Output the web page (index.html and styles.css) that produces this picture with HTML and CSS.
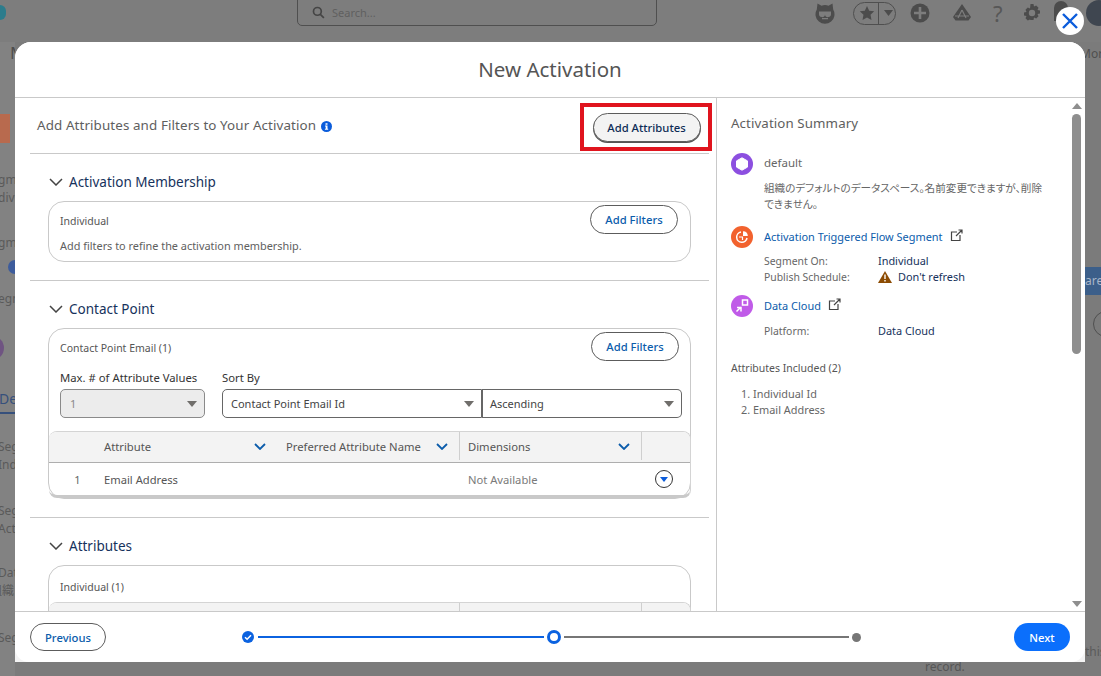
FILE: index.html
```html
<!DOCTYPE html>
<html lang="en">
<head>
<meta charset="utf-8">
<title>New Activation</title>
<link rel="stylesheet" href="styles.css">
</head>
<body>
<div class="page">
  <header class="topbar">
    <span class="logo"></span>
    <div class="search">
      <svg class="search-icon" viewBox="0 0 14 14"><circle cx="5.8" cy="5.8" r="4.2"/><path d="M9 9l3.8 3.8"/></svg>
      <span>Search...</span>
    </div>
    <div class="global-icons">
      <svg class="gi" width="22" height="22" viewBox="0 0 22 22"><path class="gd" d="M3.500 1.500l4 2.300a9.500 9.500 0 0 1 7 0l4-2.300.7 6A9.500 9.500 0 1 1 2.800 7.500z"/><path class="gl" d="M5 9.500h12v2.300a3 3 0 0 1-6 .6 3 3 0 0 1-6-.6zM8 16h6v1.300H8z"/></svg>
      <div class="fav"><svg width="16" height="16" viewBox="0 0 16 16"><path class="gd" d="M8 1l2.200 4.700 5 .6-3.700 3.500 1 5.100L8 12.400l-4.500 2.500 1-5.100L.8 6.300l5-.6z"/></svg><span class="fav-sep"></span><svg width="9" height="6" viewBox="0 0 9 6"><path class="gd" d="M0 0h9L4.500 6z"/></svg></div>
      <svg class="gi" width="20" height="20" viewBox="0 0 20 20"><circle class="gd" cx="10" cy="10" r="9.500"/><path class="gl" d="M8.700 4h2.600v4.700H16v2.600h-4.700V16H8.700v-4.700H4V8.700h4.700z"/></svg>
      <svg class="gi" width="20" height="20" viewBox="0 0 20 20"><path class="gd" d="M10 1l9 13-2.500 3.500h-13L1 14z"/><path class="gs" d="M3 13h14M10 7l-4 8M10 7l4 8"/></svg>
      <span class="help">?</span>
      <svg class="gi" width="20" height="20" viewBox="0 0 20 20"><path class="gd" d="M8.500 1h3l.5 2.500 2.200-1 2.300 2.300-1 2.200 2.500.5v3l-2.500.5 1 2.200-2.300 2.300-2.200-1-.5 2.500h-3L8 16.500l-2.200 1-2.300-2.300 1-2.200L2 12.500v-3L4.500 9l-1-2.200 2.300-2.300 2.200 1z"/><circle class="gl" cx="10" cy="10" r="3.200"/></svg>
      <span class="bell"></span>
      <span class="avatar"></span>
    </div>
  </header>
  <div class="under">
    <div class="bg-left">
      <span class="frag-m">M</span>
      <span class="frag-orange"></span>
      <span class="frag">gm</span>
      <span class="frag">divi</span>
      <span class="frag">gm</span>
      <span class="frag-blue"></span>
      <span class="frag">egn</span>
      <span class="frag-purple"></span>
      <span class="frag-tab">De</span>
      <span class="frag">Seg</span>
      <span class="frag">Indi</span>
      <span class="frag">Seg</span>
      <span class="frag">Acti</span>
      <span class="frag">Dat</span>
      <span class="frag cjk">組織</span>
      <span class="frag">Seg</span>
    </div>
    <div class="bg-middle"><span class="bg-record">record.</span></div>
    <div class="bg-right">
      <span class="frag-more">Mor</span>
      <span class="frag-share">are</span>
      <span class="frag-circle"></span>
      <span class="frag-this">this</span>
    </div>
  </div>

  <section class="modal">
    <h1 class="modal-title">New Activation</h1>
    <div class="modal-body">
      <div class="main">
        <div class="main-head">
          <h2 class="main-heading">Add Attributes and Filters to Your Activation</h2>
          <svg class="info" width="11" height="11" viewBox="0 0 11 11"><circle cx="5.500" cy="5.500" r="5.500"/><path d="M4.500 2.300h2v1.500h-2zM4 4.600h2.500v3.200h.7v1H3.900v-1h.8V5.600H4z"/></svg>
          <div class="highlight"><button class="btn btn-attrs">Add Attributes</button></div>
        </div>

        <section class="section section-first">
          <div class="section-title"><svg class="chev" width="14" height="8" viewBox="0 0 14 8"><path d="M1 1l6 6 6-6"/></svg>Activation Membership</div>
          <div class="card card-short">
            <div class="card-head"><span class="card-label">Individual</span><button class="btn btn-filter">Add Filters</button></div>
            <p class="card-note">Add filters to refine the activation membership.</p>
          </div>
        </section>

        <section class="section section-mid">
          <div class="section-title"><svg class="chev" width="14" height="8" viewBox="0 0 14 8"><path d="M1 1l6 6 6-6"/></svg>Contact Point</div>
          <div class="card">
            <div class="card-head"><span class="card-label">Contact Point Email (1)</span><button class="btn btn-filter">Add Filters</button></div>
            <div class="controls">
              <div class="field field-max">
                <label class="field-label">Max. # of Attribute Values</label>
                <div class="select select-disabled"><span>1</span><i class="caret"></i></div>
              </div>
              <div class="field field-sort">
                <label class="field-label">Sort By</label>
                <div class="select-pair">
                  <div class="select select-left"><span>Contact Point Email Id</span><i class="caret"></i></div>
                  <div class="select select-right"><span>Ascending</span><i class="caret"></i></div>
                </div>
              </div>
            </div>
            <div class="table">
              <div class="tr th">
                <span></span>
                <span class="col col-attr">Attribute<svg class="tchev" width="12" height="7" viewBox="0 0 12 7"><path d="M1 1l5 5 5-5"/></svg></span>
                <span class="col col-pref">Preferred Attribute Name<svg class="tchev" width="12" height="7" viewBox="0 0 12 7"><path d="M1 1l5 5 5-5"/></svg></span>
                <span class="col col-pref col-div">Dimensions<svg class="tchev" width="12" height="7" viewBox="0 0 12 7"><path d="M1 1l5 5 5-5"/></svg></span>
                <span class="col-div"></span>
              </div>
              <div class="tr td">
                <span class="num">1</span>
                <span class="col">Email Address</span>
                <span></span>
                <span class="col col-muted">Not Available</span>
                <span class="row-action"><i class="row-btn"><i class="row-caret"></i></i></span>
              </div>
            </div>
          </div>
        </section>

        <section class="section section-last">
          <div class="section-title"><svg class="chev" width="14" height="8" viewBox="0 0 14 8"><path d="M1 1l6 6 6-6"/></svg>Attributes</div>
          <div class="card card-clip">
            <div class="card-head card-head-plain"><span class="card-label">Individual (1)</span></div>
            <div class="table table-flush">
              <div class="tr th">
                <span></span><span></span><span></span><span class="col-div"></span><span class="col-div"></span>
              </div>
            </div>
          </div>
        </section>
      </div>

      <aside class="summary">
        <div class="summary-content">
          <h2 class="summary-title">Activation Summary</h2>
          <div class="item item-default">
            <svg class="badge" width="22" height="22" viewBox="0 0 22 22"><circle cx="11" cy="11" r="11" fill="#8c4fe0"/><path d="M11 4.800l5.500 3.100v6.200L11 17.200l-5.500-3.100V7.900z" fill="#fff" stroke="#fff" stroke-width="1" stroke-linejoin="round"/></svg>
            <div class="item-text">
              <span class="plain">default</span>
              <p class="desc">組織のデフォルトのデータスペース。名前変更できますが、削除<br>できません。</p>
            </div>
          </div>
          <div class="item item-link">
            <svg class="badge" width="22" height="22" viewBox="0 0 22 22"><circle cx="11" cy="11" r="11" fill="#f2622e"/><path d="M10 6a5.200 5.200 0 1 0 6 6" fill="none" stroke="#fff" stroke-width="1.500"/><path d="M12 10V5.200a5 5 0 0 1 4.800 4.800z" fill="#fff"/><path d="M8 11h3.500v3" fill="none" stroke="#fff" stroke-width="1.200"/></svg>
            <a class="link">Activation Triggered Flow Segment</a>
            <svg class="ext" width="13" height="13" viewBox="0 0 13 13"><path d="M7 3H1.500v8.500H10V6M6 7l6-6M8.500 1H12v3.500"/></svg>
          </div>
          <dl class="meta">
            <dt>Segment On:</dt><dd>Individual</dd>
            <dt>Publish Schedule:</dt><dd><svg class="warn" width="14" height="12" viewBox="0 0 14 12"><path d="M7 0l7 12H0z" fill="#8c4b02"/><path d="M6.300 3.500h1.400v4.500H6.300zM6.300 9h1.400v1.400H6.300z" fill="#fff"/></svg>Don't refresh</dd>
          </dl>
          <div class="item item-link item-cloud">
            <svg class="badge" width="22" height="22" viewBox="0 0 22 22"><circle cx="11" cy="11" r="11" fill="#c05be8"/><path d="M11.500 5h5v5h-5z" fill="none" stroke="#fff" stroke-width="1.500"/><path d="M5.500 16.500L10 12M6 12.500h4v4" fill="none" stroke="#fff" stroke-width="1.500"/></svg>
            <a class="link">Data Cloud</a>
            <svg class="ext" width="13" height="13" viewBox="0 0 13 13"><path d="M7 3H1.500v8.500H10V6M6 7l6-6M8.500 1H12v3.500"/></svg>
          </div>
          <dl class="meta meta-platform">
            <dt>Platform:</dt><dd>Data Cloud</dd>
          </dl>
          <h3 class="included">Attributes Included (2)</h3>
          <ol class="attr-list">
            <li>Individual Id</li>
            <li>Email Address</li>
          </ol>
        </div>
        <div class="scrollbar">
          <i class="arrow-up"></i>
          <span class="thumb"></span>
          <i class="arrow-down"></i>
        </div>
      </aside>
    </div>
    <footer class="modal-foot">
      <button class="btn btn-prev">Previous</button>
      <div class="stepper">
        <svg class="step-done" width="12" height="12" viewBox="0 0 12 12"><circle cx="6" cy="6" r="6" fill="#0b62e0"/><path d="M3 6.200l2.100 2.100L9 4.200" fill="none" stroke="#fff" stroke-width="1.500"/></svg>
        <span class="step-line step-line-done"></span>
        <span class="step-current"></span>
        <span class="step-line"></span>
        <span class="step-todo"></span>
      </div>
      <button class="btn btn-next">Next</button>
    </footer>
    <button class="close" aria-label="Close"><svg width="18" height="18" viewBox="0 0 18 18"><path d="M2 2l14 14M16 2L2 16"/></svg></button>
  </section>
</div>
</body>
</html>
```

FILE: styles.css
```css
* { box-sizing: border-box; }
html, body { margin: 0; padding: 0; height: 100%; }
body {
  font-family: "Noto Sans", "Noto Sans CJK JP", sans-serif;
  font-size: 12px;
  color: #444;
  overflow: hidden;
}
h1, h2, h3, p, dl, dd, ol { margin: 0; padding: 0; font-weight: 400; }
button { font-family: inherit; cursor: pointer; }

.page {
  position: relative;
  width: 1101px;
  height: 676px;
  background: #7b7b7b;
  overflow: hidden;
  display: flex;
  flex-direction: column;
}

/* Dimmed page behind the dialog */
.topbar {
  flex: 0 0 42px;
  display: flex;
  align-items: flex-start;
  background: #7d7d7d;
}
.logo {
  flex: none;
  width: 6px;
  height: 15px;
  margin-top: 5px;
  background: #2c7c8c;
  border-radius: 0 8px 8px 0;
}
.search {
  flex: none;
  width: 360px;
  height: 28px;
  margin: -2px 0 0 291px;
  border: 1px solid #4f4f4f;
  border-radius: 0 0 5px 5px;
  display: flex;
  align-items: center;
  padding: 0 0 0 14px;
  gap: 7px;
  color: #606060;
  font-size: 11px;
}
.search-icon { width: 13px; height: 13px; fill: none; stroke: #454545; stroke-width: 1.800; }
.global-icons {
  display: flex;
  align-items: center;
  height: 26px;
  margin-left: 157px;
  flex: none;
}
.gd { fill: #4c4c4c; }
.gl { fill: #7d7d7d; }
.gs { fill: none; stroke: #7d7d7d; stroke-width: 1.200; }
.gi { flex: none; }
.fav {
  flex: none;
  width: 43px;
  height: 23px;
  margin-left: 17px;
  border: 1px solid #4f4f4f;
  border-radius: 12px;
  display: flex;
  align-items: center;
  padding-left: 5px;
}
.fav-sep { width: 1px; height: 21px; background: #4f4f4f; margin: 0 5px 0 3px; }
.fav + .gi { margin-left: 14px; }
.fav + .gi + .gi { margin-left: 22px; }
.help { flex: none; font-size: 22px; color: #575757; margin-left: 21px; width: 13px; }
.help + .gi { margin-left: 16px; }
.bell { flex: none; width: 14px; height: 20px; margin: -4px 0 0 12px; background: #4c4c4c; border-radius: 7px 7px 0 0; }
.avatar { width: 26px; height: 26px; margin-left: 18px; background: #3f4650; border-radius: 50%; flex: none; }

.under { flex: 1; display: flex; min-height: 0; }
.bg-left {
  flex: 0 0 15px;
  overflow: hidden;
  display: grid;
  grid-template-rows: 22px 79px 46px 18px 45px 22px 34px 52px 54px 42px 18px 46px 18px 44px 18px 47px;
  background: #828282;
  color: #5a5a5a;
  font-size: 12px;
  line-height: 18px;
  white-space: nowrap;
  align-content: start;
  justify-items: start;
  align-items: end;
}
.frag { margin-left: -2px; }
.cjk { margin-left: -10px; }
.frag-m { margin-left: 10px; font-size: 17px; line-height: 22px; color: #4d4d4d; }
.frag-orange { width: 10px; height: 29px; background: #b86a4e; }
.frag-blue { width: 14px; height: 14px; margin-left: 8px; border-radius: 50%; background: #3d5c9c; }
.frag-purple { width: 24px; height: 24px; margin-left: -20px; border-radius: 50%; background: #6f5482; }
.frag-tab { margin-left: -1px; width: 16px; color: #36507c; border-bottom: 2px solid #36507c; font-size: 14px; height: 24px; }

.bg-middle {
  flex: 1;
  display: flex;
  align-items: flex-end;
  padding-left: 910px;
  color: #565656;
  line-height: 16px;
}
.bg-record { margin-bottom: 1px; }
.bg-right {
  flex: 0 0 16px;
  overflow: hidden;
  display: flex;
  flex-direction: column;
  align-items: flex-start;
  color: #4f4f4f;
  white-space: nowrap;
}
.frag-more { margin: 3px 0 0 -5px; font-size: 12px; }
.frag-share {
  margin-top: 205px;
  width: 16px;
  height: 28px;
  background: #3c5f8a;
  color: #a9b6c8;
  font-size: 12px;
  line-height: 28px;
}
.frag-circle { margin: 16px 0 0 8px; width: 26px; height: 26px; flex: none; border: 1px solid #4f4f4f; border-radius: 50%; }
.frag-this { margin-top: 306px; color: #5a5a5a; }

/* Dialog */
.modal {
  position: absolute;
  left: 15px;
  top: 42px;
  width: 1070px;
  height: 620px;
  background: #f4f4f4;
  border-radius: 16px 16px 0 0;
  display: flex;
  flex-direction: column;
}
.modal-title {
  flex: 0 0 55px;
  border-bottom: 1px solid #c9c9c9;
  border-radius: 16px 16px 0 0;
  background: #fff;
  text-align: center;
  font-size: 20.500px;
  line-height: 55px;
  color: #555;
}
.modal-body { flex: 1; display: flex; min-height: 0; background: #fff; }

.main {
  flex: 0 0 702px;
  border-right: 1px solid #c9c9c9;
  padding: 0 7px 0 15px;
  overflow: hidden;
}
.main-head {
  height: 56px;
  display: flex;
  align-items: center;
  padding-left: 7px;
  border-bottom: 1px solid #c9c9c9;
}
.main-heading { font-size: 13.400px; color: #5e5e5e; letter-spacing: .1px; margin-bottom: 2px; }
.info { margin: 2px 0 0 5px; flex: none; }
.info circle { fill: #0b5cdb; }
.info path { fill: #fff; }
.highlight {
  margin: 3px -3px 0 auto;
  width: 132px;
  height: 48px;
  border: 4px solid #e0141e;
  display: flex;
  align-items: center;
  justify-content: center;
}
.btn {
  border-radius: 15px;
  border: 1px solid #5c5c5c;
  background: #fff;
  font-size: 11.250px;
  font-weight: 500;
  height: 29px;
  padding: 0;
  color: #0b5cab;
}
.btn-attrs {
  width: 108px;
  margin-left: 1px;
  background: #f3f3f3;
  color: #0d2c56;
  box-shadow: 0 1px 0 #555;
}
.btn-filter { width: 88px; flex: none; }

.section { padding: 0 18px; border-bottom: 1px solid #c9c9c9; }
.section-first { padding-bottom: 18px; }
.section-mid { padding-bottom: 18px; }
.section-last { border-bottom: 0; }
.section-title {
  height: 47px;
  display: flex;
  align-items: center;
  gap: 6px;
  padding: 8px 0 0 1px;
  font-size: 13.500px;
  color: #16325c;
}
.chev { fill: none; stroke: #444; stroke-width: 1.500; flex: none; }
.card {
  border: 1px solid #c9c9c9;
  border-radius: 16px;
  padding: 0 0 0 11px;
}
.card-short { height: 61px; padding-right: 12px; }
.card-head {
  height: 32px;
  display: flex;
  align-items: center;
  justify-content: space-between;
  padding-top: 2px;
  padding-right: 11px;
}
.card-short .card-head { padding-right: 0; }
.card-head-plain { height: 36px; padding-top: 2px; }
.card-label { font-size: 10.500px; color: #555; margin-top: 3px; }
.card-note { font-size: 10.900px; color: #606060; margin-top: 4px; }
.controls {
  display: flex;
  margin-top: 9px;
  padding-right: 8px;
}
.field-label { display: block; font-size: 11.300px; color: #333; line-height: 16px; margin-bottom: 3px; }
.field-max { flex: 0 0 162px; }
.field-sort { flex: 1; }
.select {
  height: 29px;
  border: 1px solid #666;
  border-radius: 5px;
  display: flex;
  align-items: center;
  justify-content: space-between;
  padding: 0 7px 0 8px;
  color: #444;
  font-size: 11px;
  background: #fff;
}
.field-max .select { width: 145px; }
.select-disabled { background: #ececec; color: #8a8a8a; border-color: #8a8a8a; padding-left: 9px; }
.caret { width: 0; height: 0; border: 5px solid transparent; border-top: 6px solid #706e6b; border-bottom: 0; }
.select-pair { display: flex; }
.select-left { width: 260px; border-radius: 5px 0 0 5px; }
.select-right { flex: 1; border-left: 0; border-radius: 0 5px 5px 0; box-shadow: inset 1px 0 0 #666; }

.table {
  margin: 13px -1px 0 -11px;
  border: 1px solid #d4d4d4;
  border-bottom: 3px solid #c9c9c9;
  border-left-width: 0;
  border-radius: 8px;
  overflow: hidden;
}
.table-flush { margin-top: 0; }
.tr { display: grid; grid-template-columns: 55px 175px 180px 182px 1fr; }
.th {
  height: 31px;
  background: #f3f3f3;
  border-bottom: 1px solid #aeaeae;
  font-size: 11.250px;
  color: #555;
}
.th > span { height: 28px; }
.col { display: flex; align-items: center; justify-content: space-between; }
.col-attr { padding-right: 13px; }
.col-pref { padding: 0 11px 0 7px; }
.col-div { border-left: 1px solid #cfcfcf; }
.col-pref.col-div { padding-left: 8px; }
.tchev { fill: none; stroke: #0b5cab; stroke-width: 1.800; flex: none; }
.td { height: 32px; align-items: center; font-size: 11.200px; color: #555; }
.num { text-align: center; padding-left: 2px; color: #666; font-size: 11px; }
.col-muted { color: #7a7a7a; padding-left: 9px; }
.row-action { display: flex; justify-content: flex-end; padding-right: 17px; }
.row-btn {
  width: 18px;
  height: 18px;
  border: 1px solid #333;
  border-radius: 50%;
  display: flex;
  align-items: center;
  justify-content: center;
}
.row-caret { width: 0; height: 0; border: 4px solid transparent; border-top: 5px solid #0b5cdb; border-bottom: 0; }

/* Summary */
.summary { flex: 1; display: flex; min-width: 0; }
.summary-content { flex: 1; padding: 0 0 0 14px; min-width: 0; }
.summary-title { font-size: 13.300px; color: #5e5e5e; line-height: 18px; padding-top: 16px; height: 36px; letter-spacing: .1px; }
.item { display: flex; align-items: flex-start; }
.badge { flex: none; margin-right: 11px; }
.item-default { margin-top: 19px; height: 63px; }
.item-text { width: 295px; }
.plain { display: block; font-size: 11.500px; color: #666; line-height: 16px; margin-top: 2px; }
.desc { margin-top: 9px; font-size: 10.600px; line-height: 16px; color: #666; font-feature-settings: "palt"; white-space: nowrap; }
.item-link { margin-top: 8px; height: 26px; align-items: center; }
.link { font-size: 10.950px; color: #0b5cab; margin-top: -2px; }
.ext { fill: none; stroke: #444; stroke-width: 1.200; margin: -3px 0 0 7px; flex: none; }
.meta {
  display: grid;
  grid-template-columns: 114px 1fr;
  grid-auto-rows: 16px;
  padding-left: 33px;
  line-height: 16px;
  font-size: 10.400px;
}
.item-link + .meta { margin-top: 3px; }
dt { color: #666; }
dd { color: #16325c; font-size: 10.900px; display: flex; align-items: center; }
.warn { margin-right: 6px; }
.item-cloud { margin-top: 8px; }
.item-cloud + .meta { margin-top: 4px; }
.included { font-size: 10.500px; color: #555; margin-top: 21px; line-height: 16px; }
.attr-list { margin-top: 10px; padding-left: 22px; font-size: 10.900px; line-height: 16px; color: #666; }

.scrollbar {
  flex: 0 0 13px;
  margin-right: 2px;
  padding-top: 5px;
  display: flex;
  flex-direction: column;
  align-items: center;
}
.thumb { width: 9px; height: 240px; margin-top: 5px; background: #8e8e8e; border-radius: 5px; }
.arrow-up { width: 0; height: 0; border: 5px solid transparent; border-bottom: 6px solid #8e8e8e; border-top: 0; }
.arrow-down { width: 0; height: 0; margin-top: auto; margin-bottom: 4px; border: 5px solid transparent; border-top: 6px solid #8e8e8e; border-bottom: 0; }

/* Footer */
.modal-foot {
  flex: 0 0 51px;
  border-top: 1px solid #c9c9c9;
  border-radius: 0 0 14px 14px;
  background: #fff;
  display: flex;
  align-items: center;
  padding: 0 15px;
}
.btn-prev { width: 76px; height: 28px; flex: none; }
.btn-next { width: 56px; height: 28px; flex: none; border: 0; background: #0b6ffc; color: #fff; }
.stepper {
  flex: 1;
  display: flex;
  align-items: center;
  padding: 0 153px 0 136px;
}
.step-done { flex: none; }
.step-line { flex: 1; height: 2px; background: #767676; margin: 0 3px; }
.step-line-done { background: #0b62e0; margin: 0 3px 0 4px; }
.step-current { width: 14px; height: 14px; border: 3px solid #0b62e0; border-radius: 50%; flex: none; }
.step-todo { width: 9px; height: 9px; background: #767676; border-radius: 50%; flex: none; }

.close {
  position: absolute;
  right: 1px;
  top: -35px;
  width: 28px;
  height: 28px;
  border: 0;
  border-radius: 50%;
  background: #fff;
  padding: 0;
  display: flex;
  align-items: center;
  justify-content: center;
}
.close svg { fill: none; stroke: #0b5cdb; stroke-width: 2.400; }
```
